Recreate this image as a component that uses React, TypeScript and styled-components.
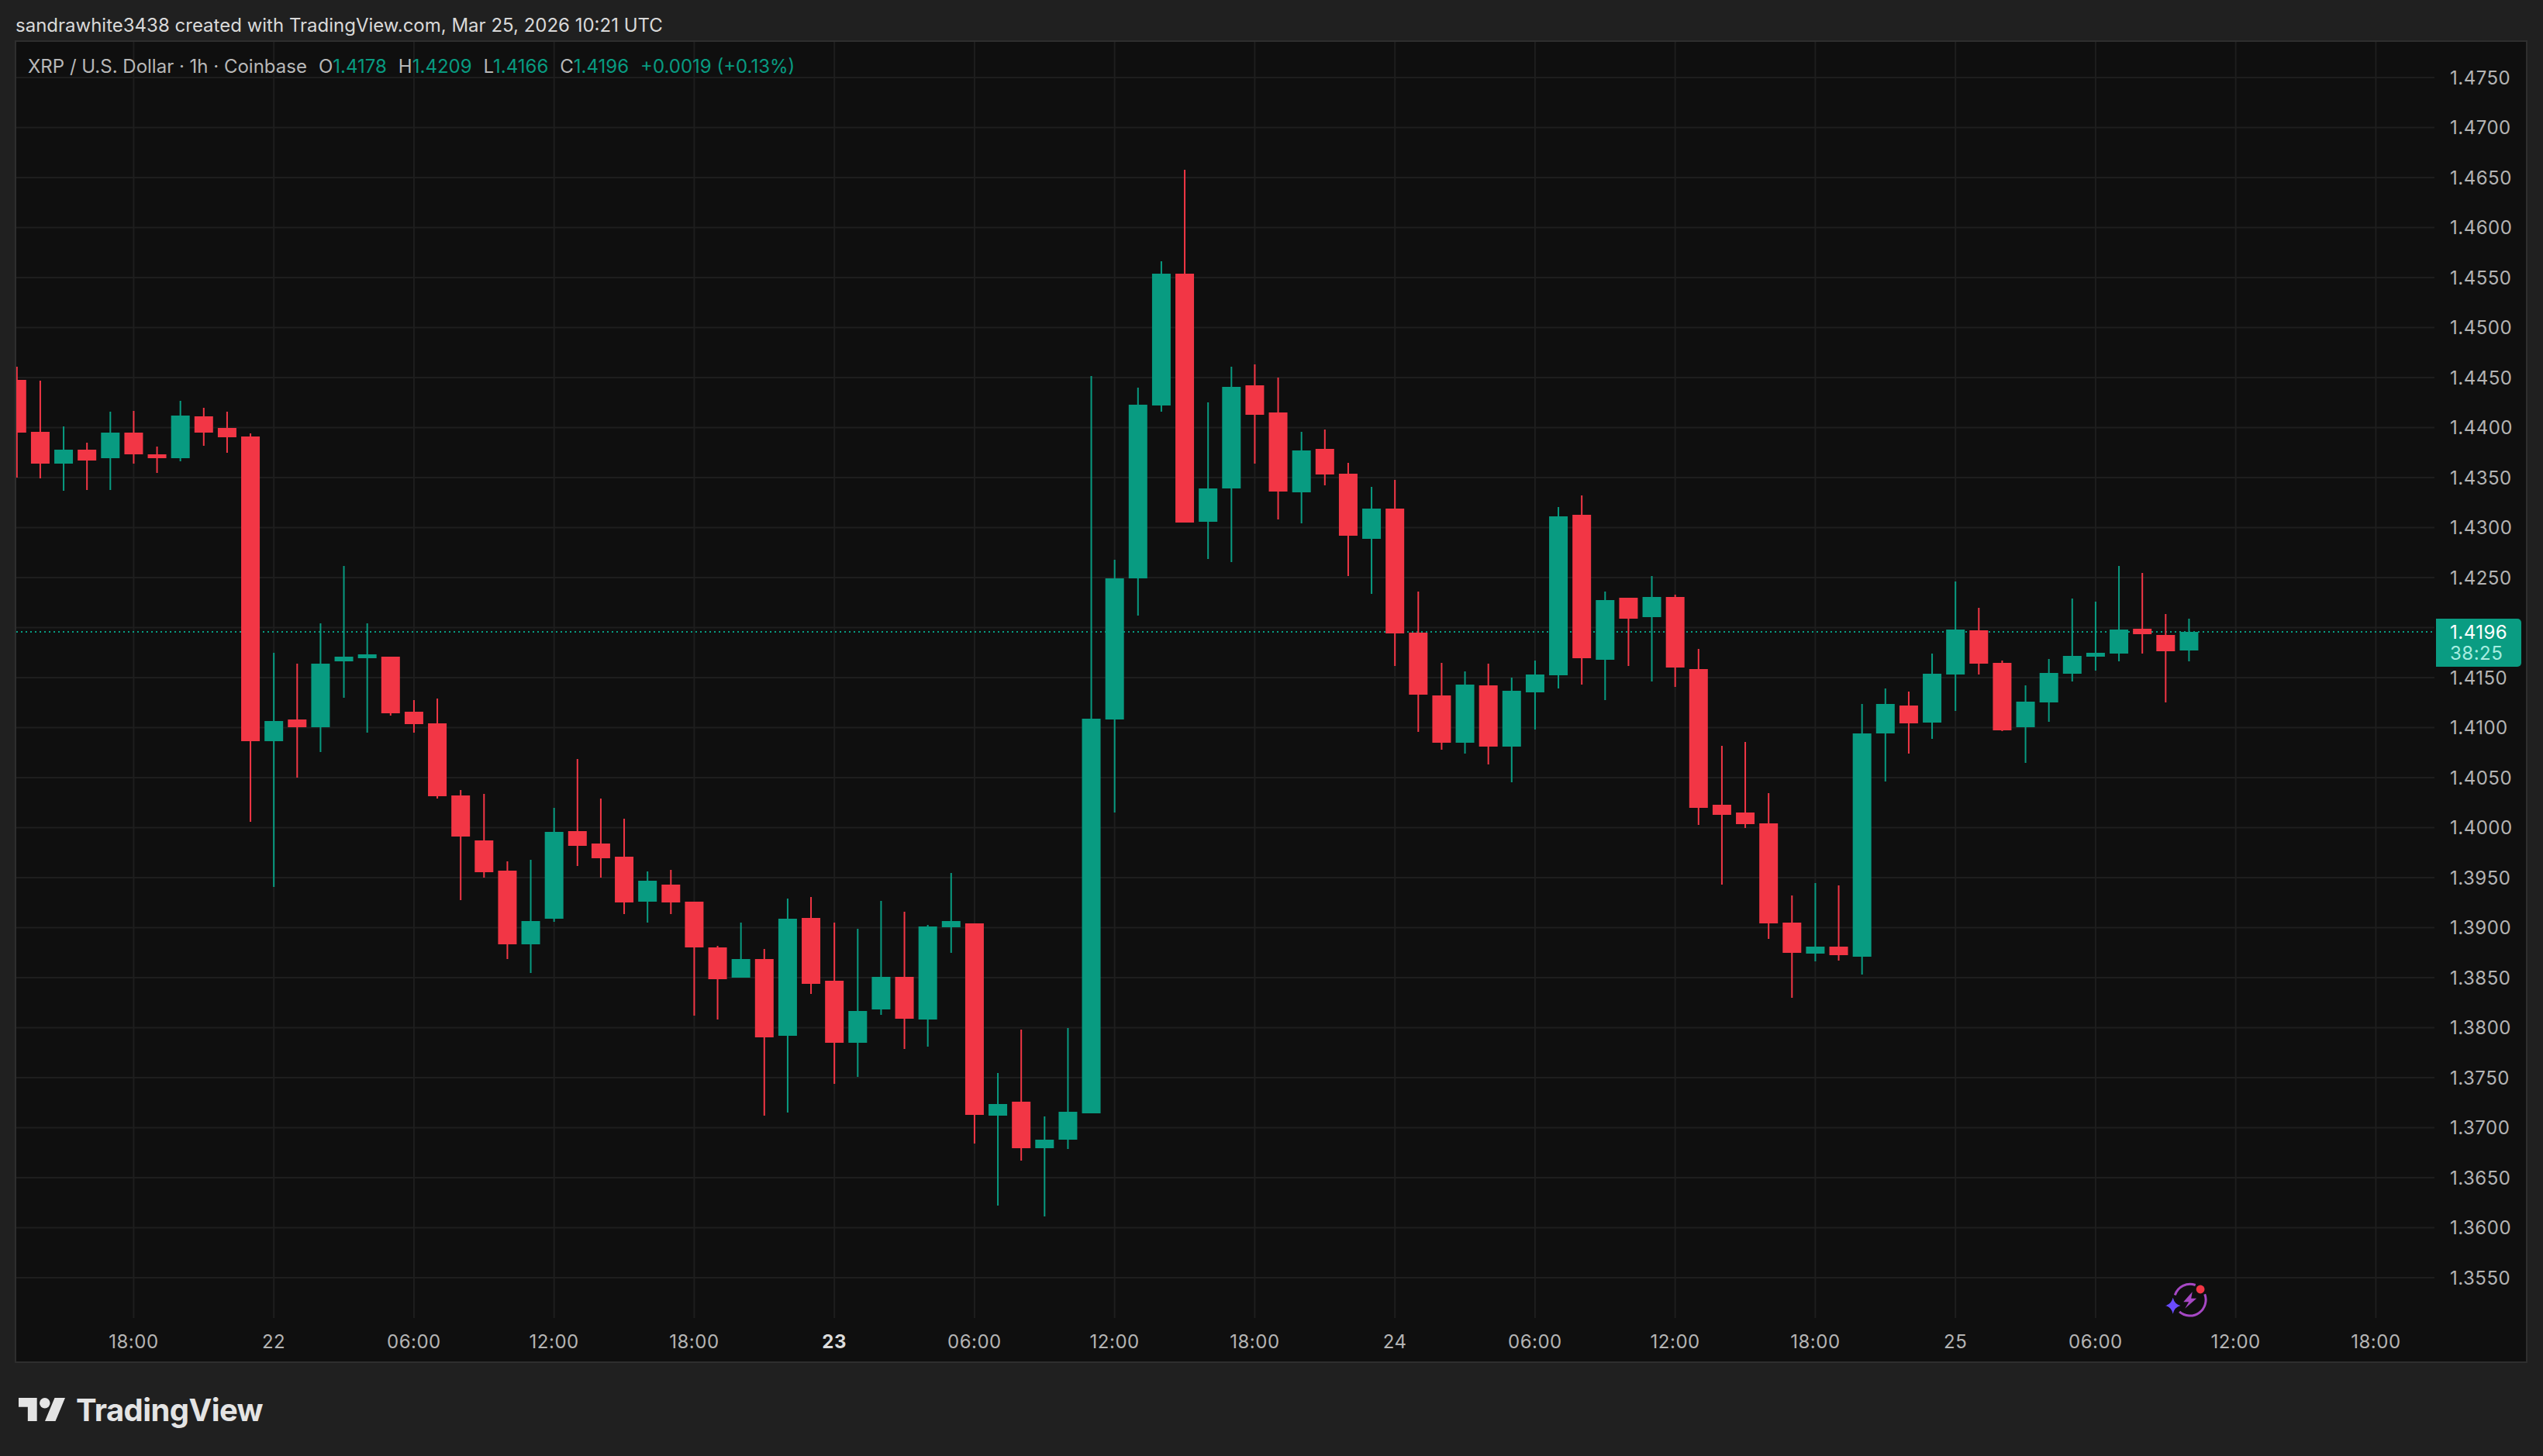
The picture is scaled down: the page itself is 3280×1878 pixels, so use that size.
import React from 'react';
import styled, { createGlobalStyle } from 'styled-components';

const GlobalStyle = createGlobalStyle`
  html, body {
    margin: 0;
    padding: 0;
    background: #202020;
  }
`;

const UP = '#089b81';
const DOWN = '#f23645';
const GRID = '#1e1e1e';
const FONT = `Inter, 'Liberation Sans', sans-serif`;

// page coords: wick top, body top, body bottom, wick bottom, up?
const candles: [number, number, number, number, 0 | 1][] = [
  [473, 490, 558, 616, 0], [491, 557, 598, 617, 0], [550, 580, 598, 633, 1], [571, 580, 594, 632, 0],
  [531, 558, 591, 632, 1], [530, 558, 586, 598, 0], [576, 586, 591, 610, 0], [517, 536, 591, 595, 1],
  [526, 537, 558, 575, 0], [531, 552, 564, 584, 0], [559, 563, 956, 1060, 0], [842, 930, 956, 1144, 1],
  [856, 928, 938, 1003, 0], [804, 856, 938, 970, 1], [730, 847, 853, 900, 1], [804, 844, 849, 945, 1],
  [847, 847, 920, 923, 0], [903, 918, 934, 945, 0], [901, 933, 1027, 1030, 0], [1019, 1026, 1079, 1161, 0],
  [1024, 1084, 1125, 1132, 0], [1111, 1123, 1218, 1237, 0], [1109, 1188, 1218, 1255, 1], [1042, 1073, 1185, 1189, 1],
  [979, 1072, 1091, 1117, 0], [1030, 1088, 1107, 1132, 0], [1056, 1105, 1164, 1179, 0], [1124, 1136, 1163, 1190, 1],
  [1122, 1141, 1164, 1179, 0], [1163, 1163, 1222, 1310, 0], [1220, 1222, 1263, 1315, 0], [1190, 1237, 1261, 1261, 1],
  [1224, 1237, 1338, 1439, 0], [1159, 1185, 1336, 1435, 1], [1157, 1184, 1269, 1282, 0], [1190, 1265, 1345, 1398, 0],
  [1198, 1304, 1345, 1389, 1], [1162, 1260, 1302, 1309, 1], [1176, 1260, 1314, 1353, 0], [1193, 1195, 1315, 1350, 1],
  [1126, 1188, 1196, 1229, 1], [1191, 1191, 1438, 1475, 0], [1384, 1424, 1439, 1555, 1], [1328, 1421, 1481, 1497, 0],
  [1440, 1470, 1481, 1569, 1], [1326, 1434, 1470, 1482, 1], [485, 927, 1436, 1436, 1], [722, 746, 928, 1048, 1],
  [500, 522, 746, 794, 1], [337, 353, 523, 531, 1], [219, 353, 674, 674, 0], [519, 630, 673, 721, 1],
  [473, 499, 630, 725, 1], [470, 497, 535, 598, 0], [487, 532, 634, 670, 0], [557, 581, 635, 675, 1],
  [554, 579, 612, 626, 0], [597, 611, 691, 743, 0], [628, 656, 695, 766, 1], [619, 656, 817, 859, 0],
  [763, 816, 896, 944, 0], [855, 897, 958, 967, 0], [866, 883, 958, 972, 1], [856, 884, 963, 986, 0],
  [874, 891, 963, 1009, 1], [852, 870, 893, 941, 1], [654, 666, 871, 888, 1], [639, 664, 849, 883, 0],
  [763, 774, 851, 903, 1], [771, 771, 798, 859, 0], [743, 770, 796, 879, 1], [767, 770, 861, 886, 0],
  [837, 863, 1042, 1064, 0], [962, 1038, 1051, 1141, 0], [957, 1048, 1063, 1068, 0], [1023, 1062, 1191, 1211, 0],
  [1155, 1190, 1229, 1287, 0], [1139, 1221, 1230, 1240, 1], [1142, 1221, 1232, 1239, 0], [908, 946, 1234, 1257, 1],
  [888, 908, 946, 1008, 1], [892, 910, 933, 972, 0], [843, 869, 932, 953, 1], [750, 812, 870, 917, 1],
  [784, 813, 856, 870, 0], [852, 855, 942, 943, 0], [884, 905, 938, 984, 1], [850, 868, 906, 931, 1],
  [772, 846, 869, 879, 1], [776, 842, 847, 865, 1], [730, 812, 843, 853, 1], [739, 811, 818, 843, 0],
  [792, 819, 840, 906, 0], [798, 815, 839, 853, 1],
];

const STEP = 30.125;
const candleX = (i: number) => 21.8 + i * STEP;
const prices = Array.from({ length: 25 }, (_, i) => (1.475 - i * 0.005).toFixed(4));
const times = ['18:00', '22', '06:00', '12:00', '18:00', '23', '06:00', '12:00', '18:00', '24', '06:00', '12:00', '18:00', '25', '06:00', '12:00', '18:00'];

const Page = styled.div`
  width: 3280px;
  height: 1878px;
  display: flex;
  flex-direction: column;
  background: #202020;
  font-family: ${FONT};
  overflow: hidden;
`;

const Header = styled.div`
  height: 52px;
  box-sizing: border-box;
  padding: 14px 0 0 20px;
  font-size: 24px;
  line-height: 38px;
  color: #d9d9d9;
  white-space: nowrap;
`;

const Panel = styled.div`
  margin-left: 19px;
  width: 3241px;
  height: 1706px;
  box-sizing: border-box;
  border: 2px solid #2e2e2e;
  background: #0f0f0f;
  display: grid;
  grid-template-columns: 3119px 118px;
  grid-template-rows: 1646px 56px;
`;

const Plot = styled.div`
  position: relative;
  grid-column: 1;
  grid-row: 1;
`;

const Legend = styled.div`
  position: absolute;
  top: 17px;
  left: 15px;
  display: flex;
  gap: 15px;
  font-size: 24px;
  line-height: 30px;
  color: #b8b8b8;
  white-space: nowrap;
`;

const LegendValue = styled.span`
  color: ${UP};
`;

const PriceAxis = styled.div`
  position: relative;
  grid-column: 2;
  grid-row: 1 / 3;
  padding-top: 13.75px;
  display: flex;
  flex-direction: column;
`;

const PriceLabel = styled.div`
  flex: 0 0 64.5px;
  display: flex;
  align-items: center;
  padding-left: 20px;
  font-size: 24px;
  letter-spacing: 0.5px;
  color: #b4b4b4;
`;

const PriceTag = styled.div`
  position: absolute;
  top: 744px;
  left: 2px;
  width: 110px;
  height: 62px;
  box-sizing: border-box;
  padding: 4px 0 0 18px;
  border-radius: 0 5px 5px 0;
  background: #0a9c82;
  font-size: 24px;
  line-height: 27px;
  letter-spacing: 0.5px;
  color: #ffffff;
`;

const Countdown = styled.div`
  color: #a6ece0;
`;

const TimeAxis = styled.div`
  grid-column: 1;
  grid-row: 2;
  padding: 4px 0 0 61px;
  display: flex;
  align-items: center;
`;

const TimeLabel = styled.div`
  flex: 0 0 180.75px;
  text-align: center;
  font-size: 24px;
  letter-spacing: 0.5px;
  color: #b4b4b4;
`;

const DayLabel = styled(TimeLabel)`
  font-weight: 700;
  color: #dcdcdc;
`;

const Footer = styled.div`
  flex: 1;
  padding-left: 24px;
  display: flex;
  align-items: center;
  gap: 14px;
`;

const Wordmark = styled.span`
  font-size: 40px;
  font-weight: 700;
  letter-spacing: -0.6px;
  color: #e4e4e4;
`;

const Chart = () => (
  <svg width={3119} height={1646} viewBox="21 54 3119 1646" style={{ display: 'block' }}>
    {prices.map((p, i) => (
      <rect key={p} x={21} y={99 + i * 64.5} width={3119} height={2} fill={GRID} />
    ))}
    {times.map((_, i) => (
      <rect key={i} x={candleX(5 + i * 6) - 1} y={54} width={2} height={1646} fill={GRID} />
    ))}
    <line x1={21} x2={3137} y1={815} y2={815} stroke={UP} strokeWidth={2} strokeDasharray="2 4" />
    {candles.map(([wt, bt, bb, wb, up], i) => {
      const x = candleX(i);
      const fill = up ? UP : DOWN;
      return (
        <g key={i} fill={fill}>
          <rect x={x - 1} y={wt} width={2} height={wb - wt} />
          <rect x={x - 12} y={bt} width={24} height={bb - bt} />
        </g>
      );
    })}
    <g transform="translate(2824.7 1676.7)">
      <path
        d="M7 -19.2 A20.4 20.4 0 0 0 -19.4 -6.2 M-13.6 15.2 A20.4 20.4 0 0 0 19 -7.4"
        fill="none"
        stroke="#a648c4"
        strokeWidth={3}
      />
      <path d="M3 -10.5 L-8.5 2.5 L-1.5 2.5 L-6.5 11 L8.5 -2 L1.5 -2 Z" fill="#a648c4" />
      <path d="M-22 -3 Q-20 5.4 -12.2 7.3 Q-20 9.2 -22 18 Q-24 9.2 -31.8 7.3 Q-24 5.4 -22 -3 Z" fill="#6a4cff" />
      <circle cx={13.4} cy={-13.7} r={5.4} fill={DOWN} />
    </g>
  </svg>
);

const LogoMark = () => (
  <svg width={60} height={30.5} viewBox="0 4 35.5 18">
    <path d="M14 22H7V11H0V4h14v18zM28 22h-8l7.5-18h8L28 22z" fill="#e4e4e4" />
    <circle cx={20} cy={8} r={4} fill="#e4e4e4" />
  </svg>
);

const App = () => (
  <Page>
    <GlobalStyle />
    <Header>sandrawhite3438 created with TradingView.com, Mar 25, 2026 10:21 UTC</Header>
    <Panel>
      <Plot>
        <Chart />
        <Legend>
          <span>XRP / U.S. Dollar · 1h · Coinbase</span>
          <span>O<LegendValue>1.4178</LegendValue></span>
          <span>H<LegendValue>1.4209</LegendValue></span>
          <span>L<LegendValue>1.4166</LegendValue></span>
          <span>C<LegendValue>1.4196</LegendValue></span>
          <LegendValue>+0.0019 (+0.13%)</LegendValue>
        </Legend>
      </Plot>
      <PriceAxis>
        {prices.map((p) => (
          <PriceLabel key={p}>{p}</PriceLabel>
        ))}
        <PriceTag>
          1.4196
          <Countdown>38:25</Countdown>
        </PriceTag>
      </PriceAxis>
      <TimeAxis>
        {times.map((t, i) =>
          t === '23' ? <DayLabel key={i}>{t}</DayLabel> : <TimeLabel key={i}>{t}</TimeLabel>
        )}
      </TimeAxis>
    </Panel>
    <Footer>
      <LogoMark />
      <Wordmark>TradingView</Wordmark>
    </Footer>
  </Page>
);

export default App;
